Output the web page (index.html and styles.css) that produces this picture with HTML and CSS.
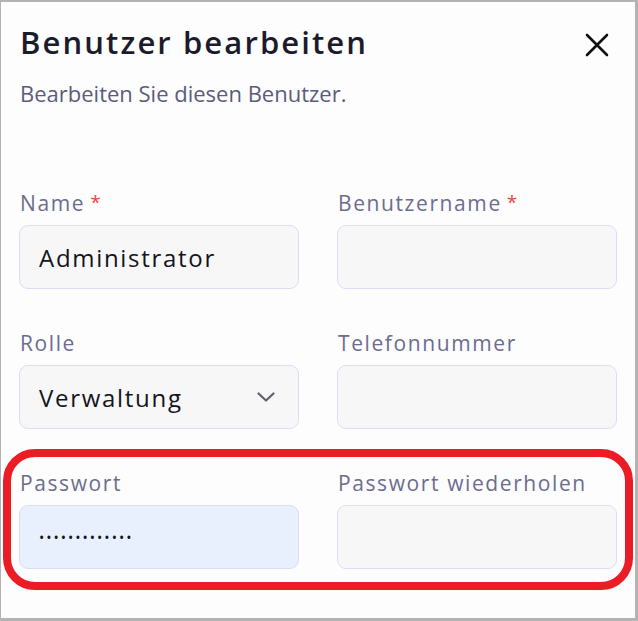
FILE: index.html
```html
<!DOCTYPE html>
<html lang="de">
<head>
<meta charset="utf-8">
<title>Benutzer bearbeiten</title>
<link rel="stylesheet" href="styles.css">
</head>
<body>
<div class="dialog">
  <div class="header">
    <h1 class="title">Benutzer bearbeiten</h1>
    <button class="close" aria-label="Schließen">
      <svg width="24" height="24" viewBox="0 0 24 24"><path d="M2 2 L22 22 M22 2 L2 22" stroke="#111" stroke-width="2.6" stroke-linecap="round" fill="none"/></svg>
    </button>
  </div>
  <p class="subtitle">Bearbeiten Sie diesen Benutzer.</p>
  <form class="grid">
    <label class="field"><span class="label">Name<span class="req">*</span></span>
      <input class="input" type="text" value="Administrator"></label>
    <label class="field"><span class="label">Benutzername<span class="req">*</span></span>
      <input class="input" type="text" value=""></label>
    <label class="field"><span class="label">Rolle</span>
      <span class="select-wrap">
        <select class="input select"><option>Verwaltung</option></select>
        <svg class="chev" width="18" height="10" viewBox="0 0 18 10"><path d="M1.5 1.5 L9 8.5 L16.5 1.5" stroke="#5f6072" stroke-width="2.2" fill="none" stroke-linecap="round" stroke-linejoin="round"/></svg>
      </span></label>
    <label class="field"><span class="label">Telefonnummer</span>
      <input class="input" type="text" value=""></label>
    <label class="field"><span class="label">Passwort</span>
      <input class="input pw" type="password" value="Administrator"></label>
    <label class="field"><span class="label">Passwort wiederholen</span>
      <input class="input" type="password" value=""></label>
  </form>
  <div class="highlight"></div>
</div>
</body>
</html>
```
FILE: styles.css
```css
html, body { margin: 0; padding: 0; }
body {
  background: #b3b3b3;
  width: 638px;
  height: 621px;
  overflow: hidden;
  font-family: "Open Sans", "DejaVu Sans", sans-serif;
}
.dialog {
  position: relative;
  box-sizing: border-box;
  margin: 2px 3px 0 1px;
  height: 616px;
  background: #fdfdfd;
  padding: 20px 18px 0 18px;
}
.header {
  display: flex;
  justify-content: space-between;
  align-items: center;
}
.title {
  margin: 0 0 0 1px;
  font-size: 31px;
  font-weight: 600;
  color: #1b1b2b;
  letter-spacing: 2.1px;
  line-height: 40px;
}
.close {
  border: 0;
  background: none;
  padding: 0;
  width: 24px;
  height: 24px;
  margin-right: 8px;
  margin-top: 6px;
  display: flex;
}
.subtitle {
  margin: 17px 0 0 1px;
  font-size: 22px;
  color: #5b5b7c;
  line-height: 28px;
  letter-spacing: 0;
}
.grid {
  margin-top: 83px;
  display: grid;
  grid-template-columns: 280px 280px;
  column-gap: 38px;
  row-gap: 41px;
}
.field {
  display: flex;
  flex-direction: column;
  gap: 9px;
}
.label {
  font-size: 21px;
  color: #6c6c8e;
  line-height: 26px;
  padding-left: 1px;
  letter-spacing: 1.6px;
}
.req {
  color: #ef4444;
  margin-left: 5px;
  font-size: 19px;
  line-height: 0;
  vertical-align: 2px;
}
.input {
  box-sizing: border-box;
  width: 100%;
  height: 64px;
  border: 1.5px solid #dedcf3;
  border-radius: 9px;
  background: #f7f7f8;
  padding: 0 19px;
  font-family: inherit;
  font-size: 24px;
  color: #141420;
  letter-spacing: 1.7px;
  outline: none;
}
.select-wrap { position: relative; display: block; }
.select {
  appearance: none;
  -webkit-appearance: none;
}
.chev {
  position: absolute;
  right: 24px;
  top: 27px;
  pointer-events: none;
}
.pw {
  background: #e8f0fe;
  border-color: #d8ddf2;
  font-size: 14px;
  letter-spacing: 2px;
}
.highlight {
  position: absolute;
  left: 2px;
  top: 447px;
  width: 630px;
  height: 141px;
  box-sizing: border-box;
  border: 8px solid #ea1c25;
  border-radius: 32px;
  pointer-events: none;
}
```
